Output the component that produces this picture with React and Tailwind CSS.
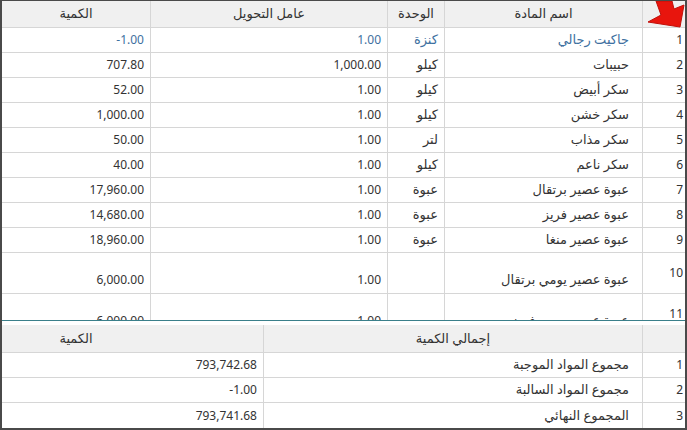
import React from "react";

const rows = [
  { n: 1, name: "جاكيت رجالي", unit: "كنزة", f: "1.00", q: "-1.00", blue: true },
  { n: 2, name: "حبيبات", unit: "كيلو", f: "1,000.00", q: "707.80" },
  { n: 3, name: "سكر أبيض", unit: "كيلو", f: "1.00", q: "52.00" },
  { n: 4, name: "سكر خشن", unit: "كيلو", f: "1.00", q: "1,000.00" },
  { n: 5, name: "سكر مذاب", unit: "لتر", f: "1.00", q: "50.00" },
  { n: 6, name: "سكر ناعم", unit: "كيلو", f: "1.00", q: "40.00" },
  { n: 7, name: "عبوة عصير برتقال", unit: "عبوة", f: "1.00", q: "17,960.00" },
  { n: 8, name: "عبوة عصير فريز", unit: "عبوة", f: "1.00", q: "14,680.00" },
  { n: 9, name: "عبوة عصير منغا", unit: "عبوة", f: "1.00", q: "18,960.00" },
  { n: 10, name: "عبوة عصير يومي برتقال", unit: "", f: "1.00", q: "6,000.00", tall: true },
  { n: 11, name: "عبوة عصير يومي فريز", unit: "", f: "1.00", q: "6,000.00", tall: true },
];

const totals = [
  { n: 1, name: "مجموع المواد الموجبة", q: "793,742.68" },
  { n: 2, name: "مجموع المواد السالبة", q: "-1.00" },
  { n: 3, name: "المجموع النهائي", q: "793,741.68" },
];

function Arrow() {
  return (
    <svg className="absolute left-0 top-0" width="42" height="27" viewBox="0 0 42 27">
      <polygon
        points="13,0 29,0 31,8 41,4 37,26 5,21 18,14"
        fill="#e8150d"
        stroke="#c10f09"
        strokeWidth="1"
        strokeLinejoin="round"
      />
    </svg>
  );
}

const Ar = ({ children }) => <span className="text-[13px]">{children}</span>;

export default function App() {
  const font = { fontFamily: '"Noto Sans", "DejaVu Sans", sans-serif' };
  return (
    <div
      className="w-[687px] h-[430px] bg-white border-t border-l-2 border-r-2 border-b-2 border-[#4a4a4a] flex flex-col overflow-hidden text-[12px] text-[#333]"
      style={font}
    >
      {/* Top grid */}
      <div className="h-[319px] overflow-hidden flex flex-col shrink-0">
        <div className="flex h-[27px] shrink-0 bg-[#f0f0f0] border-b border-[#d6d6d6]">
          <div className="w-[149px] border-r border-[#d6d6d6] flex items-center justify-center"><Ar>الكمية</Ar></div>
          <div className="w-[237px] border-r border-[#d6d6d6] flex items-center justify-center"><Ar>عامل التحويل</Ar></div>
          <div className="w-[57px] border-r border-[#d6d6d6] flex items-center justify-center"><Ar>الوحدة</Ar></div>
          <div className="w-[198px] border-r border-[#d6d6d6] flex items-center justify-center"><Ar>اسم المادة</Ar></div>
          <div className="flex-1 relative">
            <Arrow />
          </div>
        </div>
        {rows.map((r) => {
          const h = r.tall ? "h-[41px]" : "h-[25px]";
          const al = r.tall ? "items-end pb-[4px]" : "items-center";
          const c = r.blue ? "text-[#3e70a0]" : "";
          return (
            <div key={r.n} className={`flex ${h} shrink-0 border-b border-[#d6d6d6]`}>
              <div className={`w-[149px] border-r border-[#d6d6d6] flex ${al} justify-end pr-[6px] ${c}`}>{r.q}</div>
              <div className={`w-[237px] border-r border-[#d6d6d6] flex ${al} justify-end pr-[6px] ${c}`}>{r.f}</div>
              <div className={`w-[57px] border-r border-[#d6d6d6] flex ${al} justify-end pr-[6px] ${c}`}><Ar>{r.unit}</Ar></div>
              <div className={`w-[198px] border-r border-[#d6d6d6] flex ${al} justify-end pr-[13px] ${c}`}><Ar>{r.name}</Ar></div>
              <div className="flex-1 flex items-center justify-end pr-[2px]">{r.n}</div>
            </div>
          );
        })}
      </div>
      <div className="h-[1px] bg-[#3a7f8a] shrink-0" />
      <div className="h-[4px] shrink-0" />
      {/* Bottom grid */}
      <div className="flex flex-col flex-1">
        <div className="flex h-[28px] shrink-0 bg-[#f0f0f0] border-b border-[#d6d6d6]">
          <div className="w-[262px] border-r border-[#d6d6d6] flex items-center">
            <div className="w-[148px] text-center"><Ar>الكمية</Ar></div>
          </div>
          <div className="w-[379px] border-r border-[#d6d6d6] flex items-center justify-center"><Ar>إجمالي الكمية</Ar></div>
          <div className="flex-1" />
        </div>
        {totals.map((t, i) => (
          <div
            key={t.n}
            className={`flex h-[25px] shrink-0 ${i < 2 ? "border-b border-[#d6d6d6]" : ""}`}
          >
            <div className="w-[262px] border-r border-[#d6d6d6] flex items-center justify-end pr-[6px]">{t.q}</div>
            <div className="w-[379px] border-r border-[#d6d6d6] flex items-center justify-end pr-[13px]"><Ar>{t.name}</Ar></div>
            <div className="flex-1 flex items-center justify-end pr-[2px]">{t.n}</div>
          </div>
        ))}
      </div>
    </div>
  );
}
